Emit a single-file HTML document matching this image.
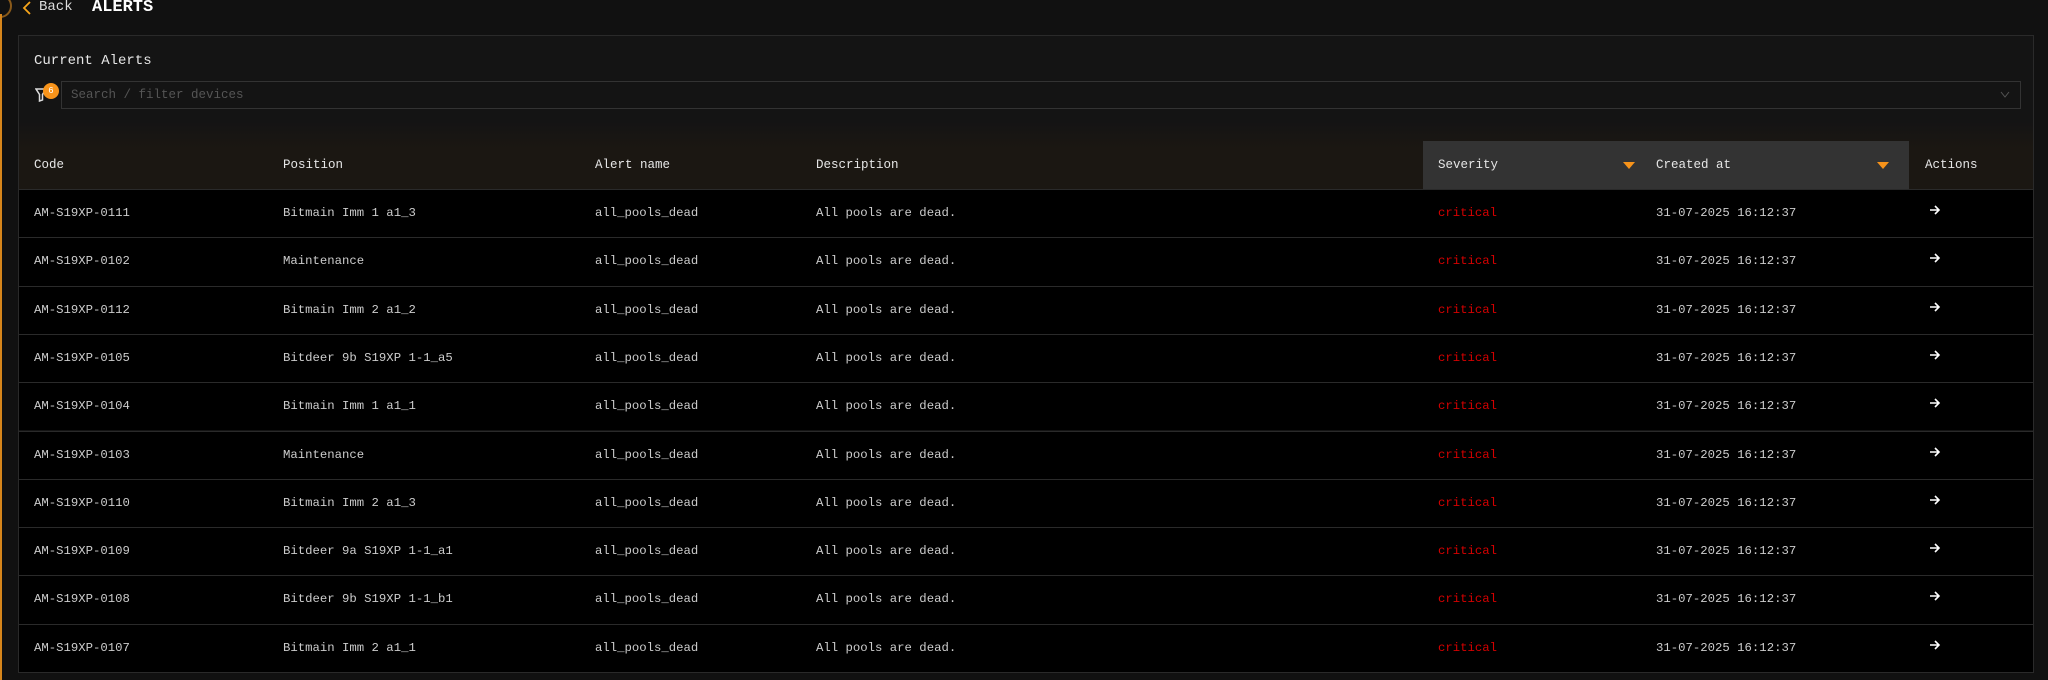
<!DOCTYPE html>
<html><head><meta charset="utf-8"><style>
*{box-sizing:border-box;margin:0;padding:0}
body{width:2048px;height:680px;background:#111;overflow:hidden;position:relative;font-family:"Liberation Mono",monospace;color:#d6d6d6}
.edge{position:absolute;left:0;top:14px;width:2px;height:666px;background:#d7861c}
.circ{position:absolute;left:-12px;top:-6px;width:24px;height:24px;border:2px solid #8a5a1a;border-radius:50%}
.back{position:absolute;left:22px;top:-1px;font-size:14px;color:#ddd}
.back svg{position:absolute;left:0;top:2px}
.title{position:absolute;left:92px;top:-2px;font-size:17px;font-weight:bold;color:#fff}
.panel{position:absolute;left:18px;top:35px;width:2016px;height:638px;background:#141414;border:1px solid #2a2a2a}
.ca{position:absolute;left:15px;top:17px;font-size:14px;color:#e6e6e6}
.inp{position:absolute;left:42px;top:45px;width:1960px;height:28px;border:1px solid #333;background:#141414;font-size:12.5px;color:#555;padding:6px 9px}
.funnel{position:absolute;left:16px;top:52px}
.badge{position:absolute;left:24px;top:47px;width:16px;height:16px;border-radius:50%;background:#f7931a;color:#fff;font-size:9px;text-align:center;line-height:16px}
.chev{position:absolute;right:10px;top:9px}
.head{position:absolute;left:0;top:85px;width:2014px;height:68px;background:linear-gradient(#141414,#1b1712 40%)}
.hc{position:absolute;top:20px;height:48px;line-height:48px;font-size:12.5px;color:#e6e6e6}
.sorted{background:#333}
.tri{position:absolute;top:21px;width:0;height:0;border-left:6px solid transparent;border-right:6px solid transparent;border-top:7px solid #f7931a}
.row{position:absolute;left:0;width:2014px;height:48.3px;background:#000;border-top:1px solid #2a2a2a;font-size:12.3px;color:#ccc}
.row span{position:absolute;top:16px}
.crit{color:#d40000}
</style></head><body>
<div class="circ"></div>
<div class="edge"></div>
<div class="back"><svg width="10" height="14" viewBox="0 0 10 14"><path d="M8 1L2 7l6 6" stroke="#f7a51a" stroke-width="1.8" fill="none"/></svg><span style="margin-left:17px">Back</span></div>
<div class="title">ALERTS</div>
<div class="panel">
<div class="ca">Current Alerts</div>
<svg class="funnel" width="12" height="14" viewBox="0 0 12 14"><path d="M1 1h10L7.5 6.5V12L4.5 13V6.5z" stroke="#ddd" stroke-width="1.5" fill="none"/></svg>
<div class="badge">6</div>
<div class="inp">Search / filter devices<svg class="chev" width="10" height="8" viewBox="0 0 10 8"><path d="M1 1l4 5 4-5" stroke="#555" fill="none"/></svg></div>
<div class="head">
<div class="hc" style="left:15px">Code</div>
<div class="hc" style="left:264px">Position</div>
<div class="hc" style="left:576px">Alert name</div>
<div class="hc" style="left:797px">Description</div>
<div class="hc sorted" style="left:1404px;width:218px;padding-left:15px">Severity<div class="tri" style="left:200px"></div></div>
<div class="hc sorted" style="left:1622px;width:268px;padding-left:15px">Created at<div class="tri" style="left:236px"></div></div>
<div class="hc" style="left:1906px">Actions</div>
</div>
<div id="rows"></div>
</div>
<script>
var d=[["AM-S19XP-0111","Bitmain Imm 1 a1_3"],["AM-S19XP-0102","Maintenance"],["AM-S19XP-0112","Bitmain Imm 2 a1_2"],["AM-S19XP-0105","Bitdeer 9b S19XP 1-1_a5"],["AM-S19XP-0104","Bitmain Imm 1 a1_1"],["AM-S19XP-0103","Maintenance"],["AM-S19XP-0110","Bitmain Imm 2 a1_3"],["AM-S19XP-0109","Bitdeer 9a S19XP 1-1_a1"],["AM-S19XP-0108","Bitdeer 9b S19XP 1-1_b1"],["AM-S19XP-0107","Bitmain Imm 2 a1_1"]];
var h="";d.forEach(function(r,i){h+='<div class="row" style="top:'+(153+i*48.3)+'px"><span style="left:15px">'+r[0]+'</span><span style="left:264px">'+r[1]+'</span><span style="left:576px">all_pools_dead</span><span style="left:797px">All pools are dead.</span><span class="crit" style="left:1419px">critical</span><span style="left:1637px">31-07-2025 16:12:37</span><span style="left:1910px;top:14px"><svg width="12" height="12" viewBox="0 0 12 12"><path d="M1 6h9M6 2l4 4-4 4" stroke="#fff" stroke-width="1.6" fill="none"/></svg></span></div>'});
document.getElementById("rows").innerHTML=h;
</script>
</body></html>
